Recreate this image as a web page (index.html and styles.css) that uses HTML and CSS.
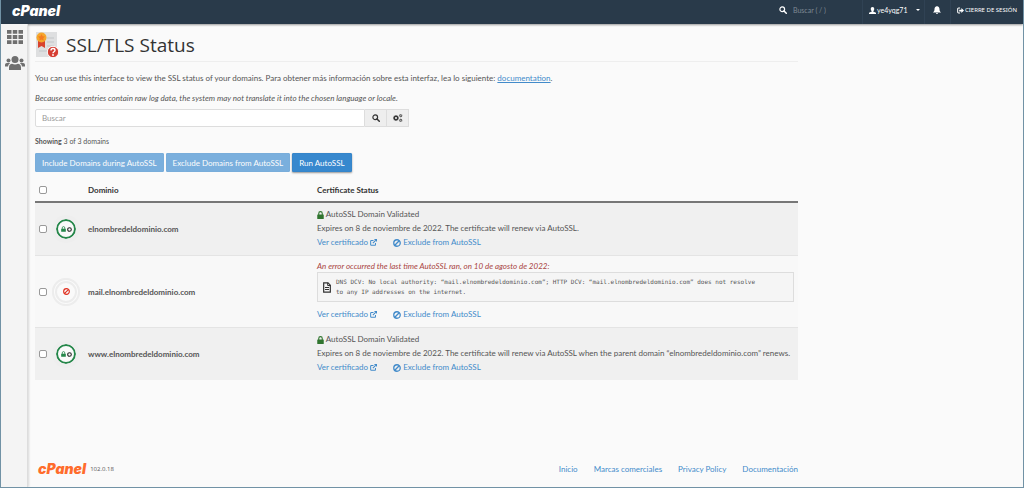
FILE: index.html
```
<!DOCTYPE html>
<html lang="es">
<head>
<meta charset="utf-8">
<title>SSL/TLS Status</title>
<link rel="stylesheet" href="styles.css">
</head>
<body>
<svg class="sprite" aria-hidden="true">
  <symbol id="search" viewBox="0 0 16 16"><circle cx="6.5" cy="6.5" r="4.7" fill="none" stroke="currentColor" stroke-width="2.4"/><path d="M10 10l4.6 4.6" stroke="currentColor" stroke-width="3" stroke-linecap="round"/></symbol>
  <symbol id="gear" viewBox="0 0 16 16"><circle cx="8" cy="8" r="4.500" fill="none" stroke="currentColor" stroke-width="3.400"/><path d="M8 0v3M8 13v3M0 8h3M13 8h3M2.300 2.300l2 2M11.700 11.700l2 2M2.300 13.700l2-2M11.700 4.300l2-2" stroke="currentColor" stroke-width="2.800"/></symbol>
  <symbol id="ring" viewBox="0 0 16 16"><circle cx="8" cy="8" r="5.800" fill="none" stroke="currentColor" stroke-width="3.400"/></symbol>
  <symbol id="lock" viewBox="0 0 14 16"><path d="M3.500 8V5a3.500 3.800 0 0 1 7 0v3" fill="none" stroke="currentColor" stroke-width="2.200"/><rect x="0.500" y="7" width="13" height="9" rx="1" fill="currentColor"/></symbol>
  <symbol id="ban" viewBox="0 0 16 16"><circle cx="8" cy="8" r="6.500" fill="none" stroke="currentColor" stroke-width="2.600"/><path d="M3.600 12.400l8.800-8.800" stroke="currentColor" stroke-width="2.600"/></symbol>
  <symbol id="external" viewBox="0 0 16 16"><path d="M8 3.500H3a1.500 1.500 0 0 0-1.500 1.500v8a1.500 1.500 0 0 0 1.500 1.500h8a1.500 1.500 0 0 0 1.500-1.500V9" fill="none" stroke="currentColor" stroke-width="2.300"/><path d="M6.500 9.500L13 3" stroke="currentColor" stroke-width="2.500"/><path d="M9 0h7v7z" fill="currentColor"/></symbol>
</svg>

<header class="topbar">
  <a class="logo" href="#">cPanel</a>
  <div class="topbar-tools">
    <label class="quick-search"><svg class="icon"><use href="#search"/></svg><input type="search" placeholder="Buscar ( / )" aria-label="Buscar herramientas"></label>
    <button class="tool user" type="button"><svg class="small" viewBox="0 0 16 16"><path fill="currentColor" d="M8 0c2.600 0 4 2 4 4.500 0 2-.8 3.800-2 4.800v1.500l5 2c.7.300 1 .8 1 1.500V16H0v-1.700c0-.7.300-1.200 1-1.500l5-2V9.300C4.800 8.300 4 6.500 4 4.500 4 2 5.400 0 8 0z"/></svg><span>ye4yqg71</span><i class="caret"></i></button>
    <button class="tool bell" type="button" aria-label="Notificaciones"><svg class="icon" viewBox="0 0 16 16"><path fill="currentColor" d="M8 0c.8 0 1.200.5 1.200 1.200C12 1.800 13 4 13 6.500c0 3 .9 4.500 2.800 6V13H.2v-.5C2.100 11 3 9.500 3 6.500 3 4 4 1.800 6.800 1.200 6.800.5 7.200 0 8 0zM6 14h4a2 2 0 0 1-4 0z"/></svg></button>
    <a class="tool logout" href="#"><svg class="small" viewBox="0 0 16 16"><path d="M7 2.500H3.500a2 2 0 0 0-2 2v7a2 2 0 0 0 2 2H7" fill="none" stroke="currentColor" stroke-width="2.400"/><path fill="currentColor" d="M5 6h5V2.500L16 8l-6 5.500V10H5z"/></svg><span>CIERRE DE SESIÓN</span></a>
  </div>
</header>

<div class="shell">
  <nav class="sidebar" aria-label="Principal">
    <a href="#" aria-label="Herramientas"><svg class="grid-icon" viewBox="0 0 16 14"><path fill="currentColor" d="M0 0h4.500v3.800H0zM5.750 0h4.500v3.800h-4.500zM11.500 0H16v3.800h-4.500zM0 5.100h4.500v3.800H0zM5.750 5.100h4.500v3.800h-4.500zM11.500 5.100H16v3.800h-4.500zM0 10.200h4.500V14H0zM5.750 10.200h4.500V14h-4.500zM11.500 10.200H16V14h-4.500z"/></svg></a>
    <a href="#" aria-label="Usuarios"><svg class="users-icon" viewBox="0 0 20 14"><g fill="currentColor"><circle cx="10" cy="3.500" r="3.500"/><circle cx="3.500" cy="4.500" r="2"/><circle cx="16.500" cy="4.500" r="2"/><path d="M4 14v-2.500C4 9 5.500 7.800 7 7.800c2 1 4 1 6 0 1.500 0 3 1.200 3 3.700V14zM0 10.500V9c0-1.300.8-2 1.800-2h3.400L3.500 8.800 3 10.500zM20 10.500V9c0-1.300-.8-2-1.800-2h-3.400l1.700 1.800.5 1.700z"/></g></svg></a>
  </nav>

  <div class="page">
    <main>
      <div class="title">
        <svg class="cert-icon" viewBox="0 0 24 26"><path fill="#dedfe0" d="M1 0h21v25H1z"/><path d="M12 6h7M12 10h7M12 14h7M4 19h8" stroke="#c3c6c8"/><path fill="#d8432f" d="M3 8h7v8l-3.500-2L3 16z"/><circle cx="6.500" cy="5.500" r="5" fill="#f5a72c"/><path fill="#f47b20" d="M6.500 2l1.100 2.200 2.400.3-1.700 1.700.4 2.400-2.200-1.100-2.200 1.100.4-2.400L3 4.500l2.400-.3z"/><circle cx="18" cy="20" r="5.700" fill="#d63d32" stroke="#fafafa"/><path d="M16 18.500c0-2.700 4-2.500 4-.2 0 1.500-2 1.400-2 3" fill="none" stroke="#fff" stroke-width="1.400"/><circle cx="18" cy="23" r=".9" fill="#fff"/></svg>
        <h1>SSL/TLS Status</h1>
      </div>
      <p class="intro">You can use this interface to view the SSL status of your domains. Para obtener más información sobre esta interfaz, lea lo siguiente: <a href="#">documentation</a>.</p>
      <p class="note">Because some entries contain raw log data, the system may not translate it into the chosen language or locale.</p>

      <form class="filter">
        <input type="text" placeholder="Buscar" aria-label="Buscar dominios">
        <button type="button" aria-label="Buscar"><svg class="icon"><use href="#search"/></svg></button>
        <button type="button" aria-label="Opciones"><svg class="cogs-icon" viewBox="0 0 20 16"><use href="#gear" x="0" y="2" width="12" height="12"/><use href="#gear" x="12" y="0" width="7" height="7"/><use href="#gear" x="12" y="9" width="7" height="7"/></svg></button>
      </form>
      <p class="count"><strong>Showing</strong> 3 of 3 domains</p>
      <div class="actions">
        <button type="button" disabled>Include Domains during AutoSSL</button>
        <button type="button" disabled>Exclude Domains from AutoSSL</button>
        <button class="run" type="button">Run AutoSSL</button>
      </div>

      <table>
        <thead>
          <tr><th class="check"><input type="checkbox" aria-label="Seleccionar todo"></th><th class="state"></th><th class="domain">Dominio</th><th>Certificate Status</th></tr>
        </thead>
        <tbody>
          <tr>
            <td class="check"><input type="checkbox" aria-label="elnombredeldominio.com"></td>
            <td class="state"><span class="badge valid"><svg class="lock-small"><use href="#lock"/></svg><svg class="ring-small"><use href="#ring"/></svg></span></td>
            <td class="domain">elnombredeldominio.com</td>
            <td class="status">
              <p><svg class="lock"><use href="#lock"/></svg> AutoSSL Domain Validated</p>
              <p>Expires on 8 de noviembre de 2022. The certificate will renew via AutoSSL.</p>
              <p class="links"><a href="#">Ver certificado <svg class="small"><use href="#external"/></svg></a><a href="#"><svg class="icon"><use href="#ban"/></svg> Exclude from AutoSSL</a></p>
            </td>
          </tr>
          <tr>
            <td class="check"><input type="checkbox" aria-label="mail.elnombredeldominio.com"></td>
            <td class="state"><span class="badge failed"><svg class="small"><use href="#ban"/></svg></span></td>
            <td class="domain">mail.elnombredeldominio.com</td>
            <td class="status">
              <p class="error">An error occurred the last time AutoSSL ran, on 10 de agosto de 2022:</p>
              <div class="log"><svg class="doc-icon" viewBox="0 0 12 16"><path d="M1 1h6.500L11 4.500V15H1z" fill="none" stroke="currentColor" stroke-width="1.800"/><path d="M7 1v4h4M3 8h6M3 11h6" fill="none" stroke="currentColor" stroke-width="1.500"/></svg><code>DNS DCV: No local authority: “mail.elnombredeldominio.com”; HTTP DCV: “mail.elnombredeldominio.com” does not resolve to any IP addresses on the internet.</code></div>
              <p class="links"><a href="#">Ver certificado <svg class="small"><use href="#external"/></svg></a><a href="#"><svg class="icon"><use href="#ban"/></svg> Exclude from AutoSSL</a></p>
            </td>
          </tr>
          <tr>
            <td class="check"><input type="checkbox" aria-label="www.elnombredeldominio.com"></td>
            <td class="state"><span class="badge valid"><svg class="lock-small"><use href="#lock"/></svg><svg class="ring-small"><use href="#ring"/></svg></span></td>
            <td class="domain">www.elnombredeldominio.com</td>
            <td class="status">
              <p><svg class="lock"><use href="#lock"/></svg> AutoSSL Domain Validated</p>
              <p>Expires on 8 de noviembre de 2022. The certificate will renew via AutoSSL when the parent domain “elnombredeldominio.com” renews.</p>
              <p class="links"><a href="#">Ver certificado <svg class="small"><use href="#external"/></svg></a><a href="#"><svg class="icon"><use href="#ban"/></svg> Exclude from AutoSSL</a></p>
            </td>
          </tr>
        </tbody>
      </table>
    </main>
    <footer>
      <div class="brand"><a class="logo orange" href="#">cPanel</a><span>102.0.18</span></div>
      <nav aria-label="Pie"><a href="#">Inicio</a><a href="#">Marcas comerciales</a><a href="#">Privacy Policy</a><a href="#">Documentación</a></nav>
    </footer>
  </div>
</div>
</body>
</html>
```
FILE: styles.css
```
* { box-sizing: border-box; }
body {
  margin: 0;
  min-height: 100vh;
  display: flex;
  flex-direction: column;
  background: #fafafa;
  border: 1px solid #7192a5;
  border-top: 0;
  color: #555;
  font: 8px/14px Lato, "Open Sans", sans-serif;
}
p, h1 { margin: 0; }
a { color: #428bca; text-decoration: none; }
button, input { font: inherit; color: inherit; margin: 0; }
svg { display: inline-block; vertical-align: middle; flex: none; }
.sprite { position: absolute; width: 0; height: 0; }
.icon { width: 8px; height: 8px; }
.small { width: 7px; height: 7px; }

.topbar {
  height: 24px;
  display: flex;
  justify-content: space-between;
  align-items: stretch;
  padding-left: 11px;
  background: #293a4a;
  color: #fff;
  box-shadow: 0 1px 2px #0006;
}
.logo {
  align-self: center;
  color: #fff;
  font: italic 900 14px/20px Inter, Roboto, sans-serif;
}
.topbar .logo { padding-bottom: 3px; }
.topbar-tools { display: flex; font-size: 7px; }
.quick-search { display: flex; align-items: center; gap: 6px; padding-bottom: 4px; }
.quick-search input { width: 69px; padding: 0; border: 0; background: none; outline: 0; }
.quick-search input::placeholder { color: #7e8993; opacity: 1; }
.tool {
  display: flex;
  align-items: center;
  gap: 1px;
  border: 0;
  border-left: 1px solid #304254;
  background: none;
  color: #fff;
  padding: 0 6px 4px;
}
.user { width: 62px; }
.bell { width: 26px; justify-content: center; }
.logout { font: 6px/14px "Noto Sans", "Open Sans", sans-serif; }
.caret { margin-left: 8px; border: 2px solid transparent; border-top-color: #fff; border-bottom: 0; }

.shell { flex: 1; display: flex; }
.sidebar {
  width: 27px;
  display: flex;
  flex-direction: column;
  align-items: center;
  gap: 12px;
  padding-top: 6px;
  padding-left: 2px;
  background: #f4f4f4;
  border-right: 1px solid #ddd;
  box-shadow: 1px 0 2px #0002;
}
.sidebar a { display: flex; color: #6f6f6f; }
.grid-icon { width: 16px; height: 14px; }
.users-icon { width: 20px; height: 14px; }

.page {
  flex: 1;
  max-width: 780px;
  display: flex;
  flex-direction: column;
  justify-content: space-between;
  padding: 5px 10px 8px 7px;
}
.title {
  display: flex;
  align-items: center;
  gap: 7px;
  height: 33px;
  padding-bottom: 1px;
  border-bottom: 1px solid #eee;
}
.cert-icon { width: 24px; height: 26px; }
h1 { color: #333; font: 400 19px/26px "Open Sans", "Noto Sans", sans-serif; }
.intro { margin-top: 9px; }
.intro a { text-decoration: underline; }
.note { margin-top: 6px; font-style: italic; }

.filter { display: flex; width: 374px; max-width: 100%; height: 18px; margin-top: 4px; }
.filter input { flex: 1; min-width: 0; padding: 0 6px; border: 1px solid #ddd; border-radius: 2px 0 0 2px; background: #fff; }
.filter input::placeholder { color: #999; opacity: 1; }
.filter button {
  width: 22px;
  padding: 0;
  display: flex;
  align-items: center;
  justify-content: center;
  border: 1px solid #ddd;
  border-left: 0;
  background: #eee;
  color: #333;
}
.cogs-icon { width: 10px; height: 8px; }
.count { margin-top: 7px; font-size: 7px; }
.actions { display: flex; gap: 2px; margin-top: 5px; }
.actions button {
  height: 19px;
  padding: 0 6px;
  border: 1px solid #3585ca;
  border-radius: 1px;
  background: #3788ce;
  color: #fff;
}
.actions button:disabled { opacity: 0.65; }
.actions .run { box-shadow: 0 1px 2px #0006; }

table { width: 100%; margin-top: 7px; border-collapse: collapse; }
th, td { padding: 0; text-align: left; vertical-align: middle; }
thead tr { height: 23px; border-bottom: 2px solid #777; color: #333; }
tbody tr { border-bottom: 1px solid #e4e4e4; background: #f8f8f8; }
tbody tr:nth-child(odd) { background: #f0f0f0; }
tbody tr:last-child { border-bottom: 0; }
.check { width: 17px; padding-left: 4px; }
.check input {
  appearance: none;
  display: block;
  width: 8px;
  height: 8px;
  border: 1px solid #999;
  border-radius: 2px;
  background: #fff;
}
.check input:checked { background: #3788ce; }
.state { width: 36px; }
.domain { width: 229px; font-weight: 700; }
.badge {
  display: flex;
  align-items: center;
  justify-content: center;
  gap: 1px;
  border-radius: 50%;
  background: #fafafa;
}
.valid { width: 20px; height: 20px; margin-left: 4px; border: 2px solid #25874a; outline: 4px solid #eee; color: #25874a; }
.failed { width: 28px; height: 28px; border: 5px double #ececec; color: #e03020; outline: 1px solid #eee; outline-offset: -1px; }
.lock-small { width: 5px; height: 6px; }
.ring-small { width: 5px; height: 5px; color: #222; }
.status { padding: 4px 4px 6px 0; }
.status p { height: 14px; }
.status .error { height: 12px; line-height: 12px; color: #a94442; font-style: italic; }
.lock { width: 7px; height: 8px; color: #30752f; }
.links { display: flex; gap: 16px; }
.log {
  display: flex;
  align-items: center;
  gap: 5px;
  margin-bottom: 5px;
  padding: 4px 32px 4px 5px;
  border: 1px solid #ddd;
  background: #f5f5f5;
}
.doc-icon { width: 8px; height: 11px; color: #333; }
code { font: 6px/10px "DejaVu Sans Mono", "Liberation Mono", monospace; }

footer { display: flex; justify-content: space-between; align-items: center; }
.brand { display: flex; align-items: center; gap: 4px; padding-left: 3px; font: 6px/14px "Open Sans", sans-serif; }
.logo.orange { color: #ff6c2c; }
footer nav { display: flex; gap: 16px; }
```
